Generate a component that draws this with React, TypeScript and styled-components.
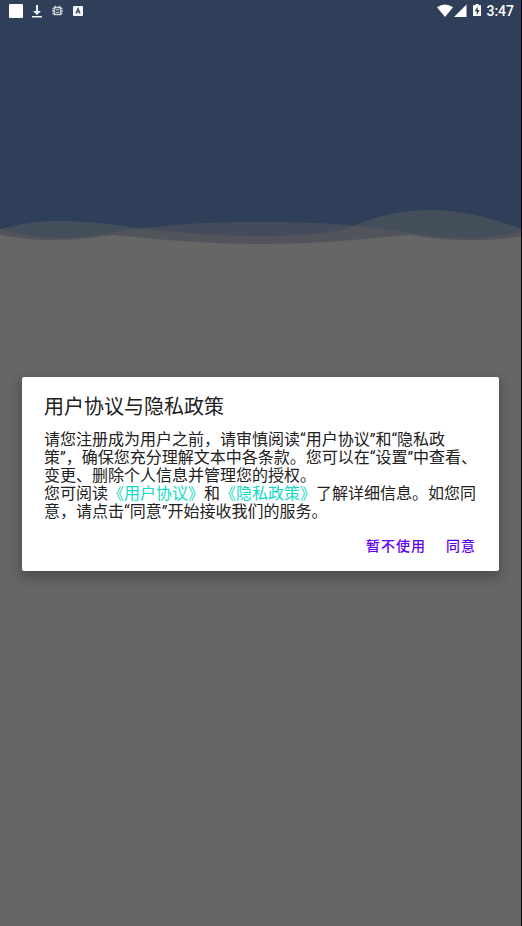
import React from "react";
import styled, { createGlobalStyle } from "styled-components";

const GlobalStyle = createGlobalStyle`
  * { box-sizing: border-box; }
  body { margin: 0; background: #666666; }
`;

const Screen = styled.main`
  display: grid;
  grid-template-rows: auto 1fr;
  min-height: 100vh;
  background: #666666;
  border-right: 1px solid #08080c;
  font-family: Roboto, "Noto Sans CJK SC", sans-serif;
  color: #212121;
`;

const Hero = styled.header`
  grid-area: 1 / 1;
  height: 248px;
  display: flex;
  flex-direction: column;
  justify-content: space-between;
  background: #303f59;
`;

const StatusBar = styled.div`
  display: flex;
  justify-content: space-between;
  align-items: center;
  height: 22px;
  padding: 0 7px 0 8px;
  color: #ffffff;
`;

const Notifications = styled.div`
  display: flex;
  align-items: center;
  gap: 8px;
`;

const System = styled.div`
  display: flex;
  align-items: center;
  gap: 1px;
`;

const Clock = styled.time`
  font-size: 14px;
  line-height: 22px;
  font-weight: 500;
`;

const Waves = styled.svg`
  display: block;
  width: 100%;
  height: 48px;
`;

const Overlay = styled.div`
  grid-row: 1 / 3;
  grid-column: 1;
  z-index: 1;
  display: flex;
  align-items: center;
  padding: 22px 22px 0;
`;

const Dialog = styled.section`
  width: 100%;
  padding: 16px 15px 8px 22px;
  border-radius: 2px;
  background: #ffffff;
  box-shadow: 0 5px 12px 2px rgba(0, 0, 0, 0.24);
`;

const Title = styled.h1`
  margin: 0;
  font-size: 20px;
  line-height: 28px;
  font-weight: 400;
`;

const Body = styled.p`
  margin: 10px 6px 0 0;
  font-size: 16px;
  line-height: 18px;
`;

const PolicyLink = styled.a`
  color: #12dac6;
  text-decoration: none;
`;

const Actions = styled.div`
  display: flex;
  justify-content: flex-end;
  gap: 4px;
  margin-top: 8px;
`;

const TextButton = styled.button`
  height: 34px;
  padding: 0 8px;
  border: 0;
  background: transparent;
  color: #6200ee;
  font: 500 14px/20px Roboto, "Noto Sans CJK SC", sans-serif;
  letter-spacing: 1px;
  cursor: pointer;
`;

export default function App() {
  return (
    <Screen>
      <GlobalStyle />
      <Hero>
        <StatusBar>
          <Notifications>
            <svg width="15" height="22" viewBox="0 0 15 22" aria-hidden="true">
              <rect x="1" y="4" width="14" height="14" rx="1" fill="#fff" />
            </svg>
            <svg width="12" height="22" viewBox="0 0 12 22" aria-hidden="true">
              <path d="M5 5h2v6h3l-4 4-4-4h3zM1 16h10v1.5H1z" fill="#eef0f4" />
            </svg>
            <svg width="13" height="22" viewBox="0 0 13 22" fill="none" stroke="#cdd2da" aria-hidden="true">
              <path d="M3.500 7.500h6v7h-6zM1.500 8.500h2M9.500 8.500h2M1 11h2.500M9.500 11h2.500M1.500 13.500h2M9.500 13.500h2M4 6l1 1.500M9 6L8 7.500" strokeWidth="1.4" />
              <path d="M5 9.700h3M5 12.300h3" strokeWidth="1" />
            </svg>
            <svg width="11" height="22" viewBox="0 0 11 22" aria-hidden="true">
              <rect x="1" y="6" width="10" height="10" rx="1" fill="#f5f6f8" />
              <path d="M4 13.500l2-5 2 5M4.700 12h2.600" fill="none" stroke="#303f59" strokeWidth="1.2" />
            </svg>
          </Notifications>
          <System>
            <svg width="16" height="22" viewBox="0 0 16 22" aria-hidden="true">
              <path d="M0 7.300Q8 1.700 16 7.300L8 17z" fill="#fff" />
            </svg>
            <svg width="13" height="22" viewBox="0 0 13 22" aria-hidden="true">
              <path d="M12.500 4.500V17H0z" fill="#fff" />
            </svg>
            <svg width="17" height="22" viewBox="0 0 17 22" aria-hidden="true">
              <path d="M7.500 4h3v1.300H13V16H5V5.300h2.500z" fill="#fff" />
              <path d="M9.700 6.500L6.700 11.300h2V15l3-5h-2z" fill="#303f59" />
            </svg>
            <Clock>3:47</Clock>
          </System>
        </StatusBar>
        <Waves viewBox="0 0 521 48" preserveAspectRatio="none" aria-hidden="true">
          <path
            d="M0 29C20 24 39 21 59 21C94 21 120 26 153 30C192 34 225 36 261 36C315 36 336 32 356 25C380 15 405 10 430 10C465 10 497 20 521 29V48H0Z"
            fill="#666a5f"
            fillOpacity="0.4"
          />
          <path
            d="M0 29C20 35 38 38 59 38C95 38 113 31 153 27C190 23 225 22 261 22C315 22 350 24 390 30C420 35 443 38 470 38C492 38 509 35 521 31V48H0Z"
            fill="#63605d"
            fillOpacity="0.4"
          />
          <path
            d="M0 35C18 38 36 40 55 40C78 40 96 37 113 35C165 40 210 44 261 44C319 44 365 39 410 35C430 38 447 40 471 40C492 40 510 38 521 36V48H0Z"
            fill="#666666"
          />
        </Waves>
      </Hero>
      <Overlay>
        <Dialog role="dialog" aria-modal="true" aria-labelledby="policy-title">
          <Title id="policy-title">用户协议与隐私政策</Title>
          <Body>
            请您注册成为用户之前，请审慎阅读“用户协议”和“隐私政策”，确保您充分理解文本中各条款。您可以在“设置”中查看、变更、删除个人信息并管理您的授权。
            <br />
            您可阅读<PolicyLink href="#terms">《用户协议》</PolicyLink>和<PolicyLink href="#privacy">《隐私政策》</PolicyLink>了解详细信息。如您同意，请点击“同意”开始接收我们的服务。
          </Body>
          <Actions>
            <TextButton type="button">暂不使用</TextButton>
            <TextButton type="button">同意</TextButton>
          </Actions>
        </Dialog>
      </Overlay>
    </Screen>
  );
}
